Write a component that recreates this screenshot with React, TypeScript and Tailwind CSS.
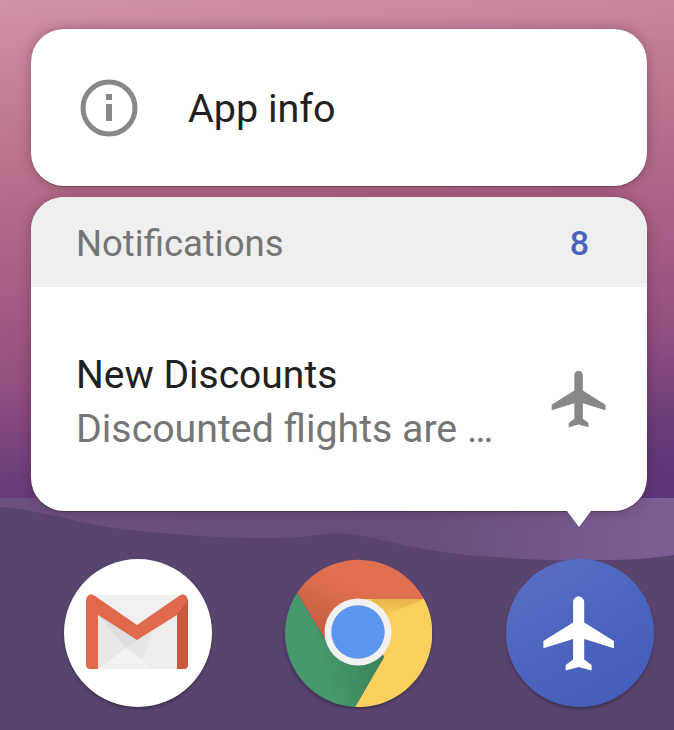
const planePath =
  "M21 16v-2l-8-5V3.5c0-.83-.67-1.5-1.5-1.5S10 2.67 10 3.5V9l-8 5v2l8-2.5V19l-2 1.5V22l3.5-1 3.5 1v-1.5L13 19v-5.5l8 2.5z"

function Wallpaper() {
  return (
    <svg className="absolute inset-0" width="674" height="730" viewBox="0 0 674 730">
      <defs>
        <linearGradient id="band" x1="0" y1="0" x2="1" y2="0">
          <stop offset="0" stopColor="#6b5080" />
          <stop offset="0.6" stopColor="#674d7d" />
          <stop offset="1" stopColor="#7c5e95" />
        </linearGradient>
      </defs>
      <path d="M0 498 L674 498 L674 730 L0 730 Z" fill="#58446f" />
      <path
        d="M0 507 C20 508 35 512 56 516 C80 522 105 527 129 530 C190 536 250 540 301 537 C320 535 335 532 350 534 C380 538 405 547 430 550 C455 554 475 556 494 557 C530 560 570 561 602 560 C630 560 655 558 674 555 L674 498 L0 498 Z"
        fill="url(#band)"
      />
    </svg>
  )
}

function GmailIcon() {
  return (
    <div className="w-[148px] h-[148px] rounded-full bg-white shadow-[0_2px_3px_rgba(0,0,0,0.3)]">
      <svg width="148" height="148" viewBox="0 0 148 148">
        <path d="M26 36 H120 V110 H26 Z" fill="#f1f1f1" />
        <path d="M34 56 L62 89 L35 110 H34 Z" fill="#e8e8e8" />
        <path d="M113 56 L73 81 L62 89 L90 110 H113 Z" fill="#ededed" />
        <path d="M35 110 L62 89 L90 110 Z" fill="#f2f2f2" />
        <path d="M34 56 L73 81 L62 89 Z" fill="#dedede" />
        <path d="M73 81 L62 89 L78 100 L88 73 Z" fill="#e6e6e6" />
        <path
          d="M22 42 C22 36 27 33.500 31 37 L73 66 L115 37 C119 33.500 124 36 124 42 V106 C124 108.500 122 110 120 110 H113 V56 L73 81 L34 56 V110 H26 C24 110 22 108.500 22 106 Z"
          fill="#e0694c"
        />
        <path d="M113 56 L124 40 V106 C124 108.500 122 110 120 110 H113 Z" fill="#c85a3b" />
      </svg>
    </div>
  )
}

function ChromeIcon() {
  return (
    <div className="w-[148px] h-[148px] rounded-full shadow-[0_2px_3px_rgba(0,0,0,0.3)]">
      <svg width="148" height="148" viewBox="0 0 148 148">
        <defs>
          <linearGradient id="redShade" x1="0.1" y1="0.9" x2="0.5" y2="0.4">
            <stop offset="0" stopColor="#c45b40" />
            <stop offset="1" stopColor="#e06f4f" />
          </linearGradient>
          <linearGradient id="greenShade" x1="0.9" y1="0.2" x2="0.3" y2="0.4">
            <stop offset="0" stopColor="#3a8058" />
            <stop offset="1" stopColor="#45996c" />
          </linearGradient>
          <linearGradient id="yellowShade" x1="0" y1="0" x2="0" y2="1">
            <stop offset="0" stopColor="#e8b34d" />
            <stop offset="1" stopColor="#f9d05e" />
          </linearGradient>
        </defs>
        <path d="M140 40 A74 74 0 0 1 71 148 L100 98 L74 40 Z" fill="#f9d05e" />
        <path d="M87 40 L140 40 L98 58 Z" fill="url(#yellowShade)" />
        <path d="M13 34 A74 74 0 0 1 140 40 L74 40 L42 82 Z" fill="url(#redShade)" />
        <path d="M13 34 A74 74 0 0 0 71 148 L100 98 L74 74 L42 82 Z" fill="url(#greenShade)" />
        <circle cx="74" cy="73" r="33.500" fill="#f1f1f1" />
        <circle cx="74" cy="73" r="26.700" fill="#5a96f0" />
      </svg>
    </div>
  )
}

function PlaneAppIcon() {
  return (
    <div className="w-[148px] h-[148px] rounded-full bg-[linear-gradient(150deg,#5a70c4_0%,#4a63bd_55%,#435db8_100%)] shadow-[0_2px_3px_rgba(0,0,0,0.3)] flex items-center justify-center">
      <svg width="89" height="89" viewBox="0 0 24 24" fill="#ffffff">
        <path d={planePath} />
      </svg>
    </div>
  )
}

export default function App() {
  return (
    <div
      className="relative w-[674px] h-[730px] overflow-hidden bg-[linear-gradient(175deg,#d291ad_0%,#b9728f_20%,#a65c84_38%,#8f4d80_50%,#6c3d7b_61%,#5c3677_67%)]"
      style={{ fontFamily: "Roboto, sans-serif" }}
    >
      <Wallpaper />

      <div className="relative pt-[29px] pl-[31px] pr-[27px]">
        {/* App info */}
        <div className="h-[157px] rounded-[33px] bg-white flex items-center shadow-[0_1px_0_rgba(0,0,0,0.25),0_0_12px_rgba(60,20,30,0.35)]">
          <svg className="ml-[49px]" width="58" height="58" viewBox="0 0 58 58">
            <circle cx="29" cy="29" r="26" fill="none" stroke="#888888" strokeWidth="5" />
            <rect x="26" y="15" width="6" height="6" fill="#888888" />
            <rect x="26" y="25" width="6" height="17" fill="#888888" />
          </svg>
          <span className="ml-[50px] pt-[3px] text-[39.500px] text-[#212121]">App info</span>
        </div>

        {/* Notifications */}
        <div className="relative mt-[11px] h-[314px] rounded-[33px] bg-white shadow-[0_1px_0_rgba(0,0,0,0.25),0_0_12px_rgba(60,20,30,0.35)]">
          <div className="h-[90px] rounded-t-[33px] bg-[#efeff0] flex items-center justify-between pl-[45px] pr-[58px]">
            <span className="pt-[5px] text-[36.500px] text-[#757575]">Notifications</span>
            <span className="pt-[2px] text-[34px] font-medium text-[#4a62bd]">8</span>
          </div>
          <div className="flex items-center justify-between pl-[45px] pr-[33px] pt-[61px]">
            <div>
              <div className="text-[39px] leading-[54px] text-[#212121]">New Discounts</div>
              <div className="text-[39.300px] leading-[54px] text-[#757575]">Discounted flights are …</div>
            </div>
            <svg className="mt-[-6px]" width="68" height="68" viewBox="0 0 24 24" fill="#888888">
              <path d={planePath} />
            </svg>
          </div>
          <div className="absolute left-[536px] top-[314px] w-0 h-0 border-x-[12px] border-x-transparent border-t-[16px] border-t-white" />
        </div>

        {/* Dock */}
        <div className="flex mt-[48px] pl-[33px] gap-[72px]">
          <GmailIcon />
          <ChromeIcon />
          <div className="ml-[2px]">
            <PlaneAppIcon />
          </div>
        </div>
      </div>
    </div>
  )
}
